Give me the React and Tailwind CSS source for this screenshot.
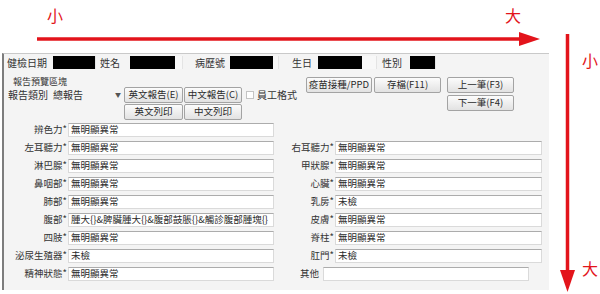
import React from 'react';

const FONT = { fontFamily: '"Noto Sans CJK TC", "Noto Sans CJK SC", sans-serif' };

const leftRows = [
  ['辨色力*', '無明顯異常'],
  ['左耳聽力*', '無明顯異常'],
  ['淋巴腺*', '無明顯異常'],
  ['鼻咽部*', '無明顯異常'],
  ['肺部*', '無明顯異常'],
  ['腹部*', '腫大{}&脾臟腫大{}&腹部鼓脹{}&觸診腹部腫塊{}'],
  ['四肢*', '無明顯異常'],
  ['泌尿生殖器*', '未檢'],
  ['精神狀態*', '無明顯異常'],
];

const rightRows = [
  null,
  ['右耳聽力*', '無明顯異常'],
  ['甲狀腺*', '無明顯異常'],
  ['心臟*', '無明顯異常'],
  ['乳房*', '未檢'],
  ['皮膚*', '無明顯異常'],
  ['脊柱*', '無明顯異常'],
  ['肛門*', '未檢'],
  'other',
];

const Btn = ({ children, className = '' }) => (
  <div
    className={`flex items-center justify-center h-[16px] rounded-[2px] border border-[#a3a3a3] bg-gradient-to-b from-[#fcfcfc] to-[#e2e2e2] text-[9.5px] leading-none text-[#2a2a2a] ${className}`}
  >
    {children}
  </div>
);

const Field = ({ value, className = '' }) => (
  <div
    className={`h-[14px] flex items-center bg-white border border-[#dadada] border-t-[#acacac] pl-[2px] text-[9.5px] leading-none text-[#2a2a2a] whitespace-nowrap overflow-hidden ${className}`}
  >
    {value}
  </div>
);

// black-filled header field (masked data)
const Masked = ({ w, fill }) => (
  <div className="h-[13px] flex bg-[#f8f8f8] border-r border-[#e4e4e4]" style={{ width: w }}>
    <div className="h-full bg-black" style={{ width: fill }} />
  </div>
);

export default function App() {
  return (
    <div className="flex w-[600px] h-[294px] bg-white overflow-hidden" style={FONT}>
      <div className="flex flex-col w-[550px]">
        {/* horizontal annotation */}
        <div className="h-[53px] flex flex-col">
          <div className="flex pt-[7px] h-[23px] text-[16px] leading-[16px] text-[#e3141b]">
            <span className="ml-[47px]">小</span>
            <span className="ml-[442px]">大</span>
          </div>
          <svg className="ml-[37px] mt-[9px]" width="503" height="14" viewBox="0 0 503 14">
            <line x1="0" y1="7" x2="486" y2="7" stroke="#e3141b" strokeWidth="3.5" />
            <polygon points="482,0 503,7 482,14" fill="#e3141b" />
          </svg>
        </div>

        {/* form panel */}
        <div className="ml-[2px] w-[547px] h-[237px] bg-[#f4f4f4] border-l-2 border-l-[#7d7d7d] border-t border-t-[#c9c9c9] text-[#333]">
          {/* header */}
          <div className="flex items-center h-[15px] mt-[1px] text-[10px] leading-none">
            <span className="ml-[3px] w-[46px]">健檢日期</span>
            <Masked w={43} fill={42} />
            <span className="ml-[4px] w-[30px]">姓名</span>
            <Masked w={53} fill={45} />
            <span className="ml-[12px] w-[35px]">病歷號</span>
            <Masked w={49} fill={43} />
            <span className="ml-[13px] w-[26px]">生日</span>
            <Masked w={59} fill={44} />
            <span className="ml-[5px] w-[28px]">性別</span>
            <Masked w={26} fill={26} />
          </div>

          {/* report area + action buttons */}
          <div className="flex mt-[6px]">
            <div className="flex flex-col w-[300px]">
              <div className="h-[11px] ml-[9px] text-[9px] leading-[11px]">報告預覽區塊</div>
              <div className="flex items-center h-[15px]">
                <span className="ml-[4px] w-[45px] text-[10px] leading-none">報告類別</span>
                <div className="flex items-center w-[71px] h-[13px] text-[10px] leading-none">
                  <span>總報告</span>
                  <span className="ml-auto mr-[3px] text-[6px] text-[#555]">▼</span>
                </div>
                <Btn className="w-[59px]">英文報告(E)</Btn>
                <Btn className="w-[58px] ml-[1px]">中文報告(C)</Btn>
                <div className="ml-[4px] w-[8px] h-[8px] border border-[#c4c4c4] bg-white" />
                <span className="ml-[3px] text-[10px] leading-none">員工格式</span>
              </div>
              <div className="flex h-[15px] mt-[2px] pl-[120px]">
                <Btn className="w-[59px] h-[15px]">英文列印</Btn>
                <Btn className="w-[58px] h-[15px] ml-[1px]">中文列印</Btn>
              </div>
            </div>
            <div className="flex mt-[1px] ml-[2px]">
              <Btn className="w-[66px]">疫苗接種/PPD</Btn>
              <Btn className="w-[67px] ml-[2px]">存檔(F11)</Btn>
              <div className="flex flex-col ml-[6px] gap-[2px]">
                <Btn className="w-[67px]">上一筆(F3)</Btn>
                <Btn className="w-[67px]">下一筆(F4)</Btn>
              </div>
            </div>
          </div>

          {/* exam fields */}
          <div className="flex flex-col gap-[4px] mt-[4px]">
            {leftRows.map((l, i) => {
              const r = rightRows[i];
              return (
                <div key={i} className="flex h-[14px] items-center">
                  <span className="w-[64px] pr-[1px] text-right text-[9.5px] leading-none whitespace-nowrap">{l[0]}</span>
                  <Field value={l[1]} className="w-[206px]" />
                  {r === 'other' && (
                    <>
                      <span className="w-[45px] text-right text-[9.5px] leading-none">其他</span>
                      <Field value="" className="ml-[4px] w-[206px]" />
                    </>
                  )}
                  {Array.isArray(r) && (
                    <>
                      <span className="w-[61px] pr-[1px] text-right text-[9.5px] leading-none whitespace-nowrap">{r[0]}</span>
                      <Field value={r[1]} className="w-[207px]" />
                    </>
                  )}
                </div>
              );
            })}
          </div>
        </div>
      </div>

      {/* vertical annotation */}
      <div className="flex w-[50px] pt-[34px]">
        <svg className="ml-[10px]" width="16" height="258" viewBox="0 0 16 258">
          <line x1="7.5" y1="0" x2="7.5" y2="240" stroke="#e3141b" strokeWidth="3.5" />
          <polygon points="0,236 15,236 7.5,258" fill="#e3141b" />
        </svg>
        <div className="flex flex-col ml-[6px] text-[16px] leading-[16px] text-[#e3141b]">
          <span className="mt-[18px]">小</span>
          <span className="mt-[192px]">大</span>
        </div>
      </div>
    </div>
  );
}
